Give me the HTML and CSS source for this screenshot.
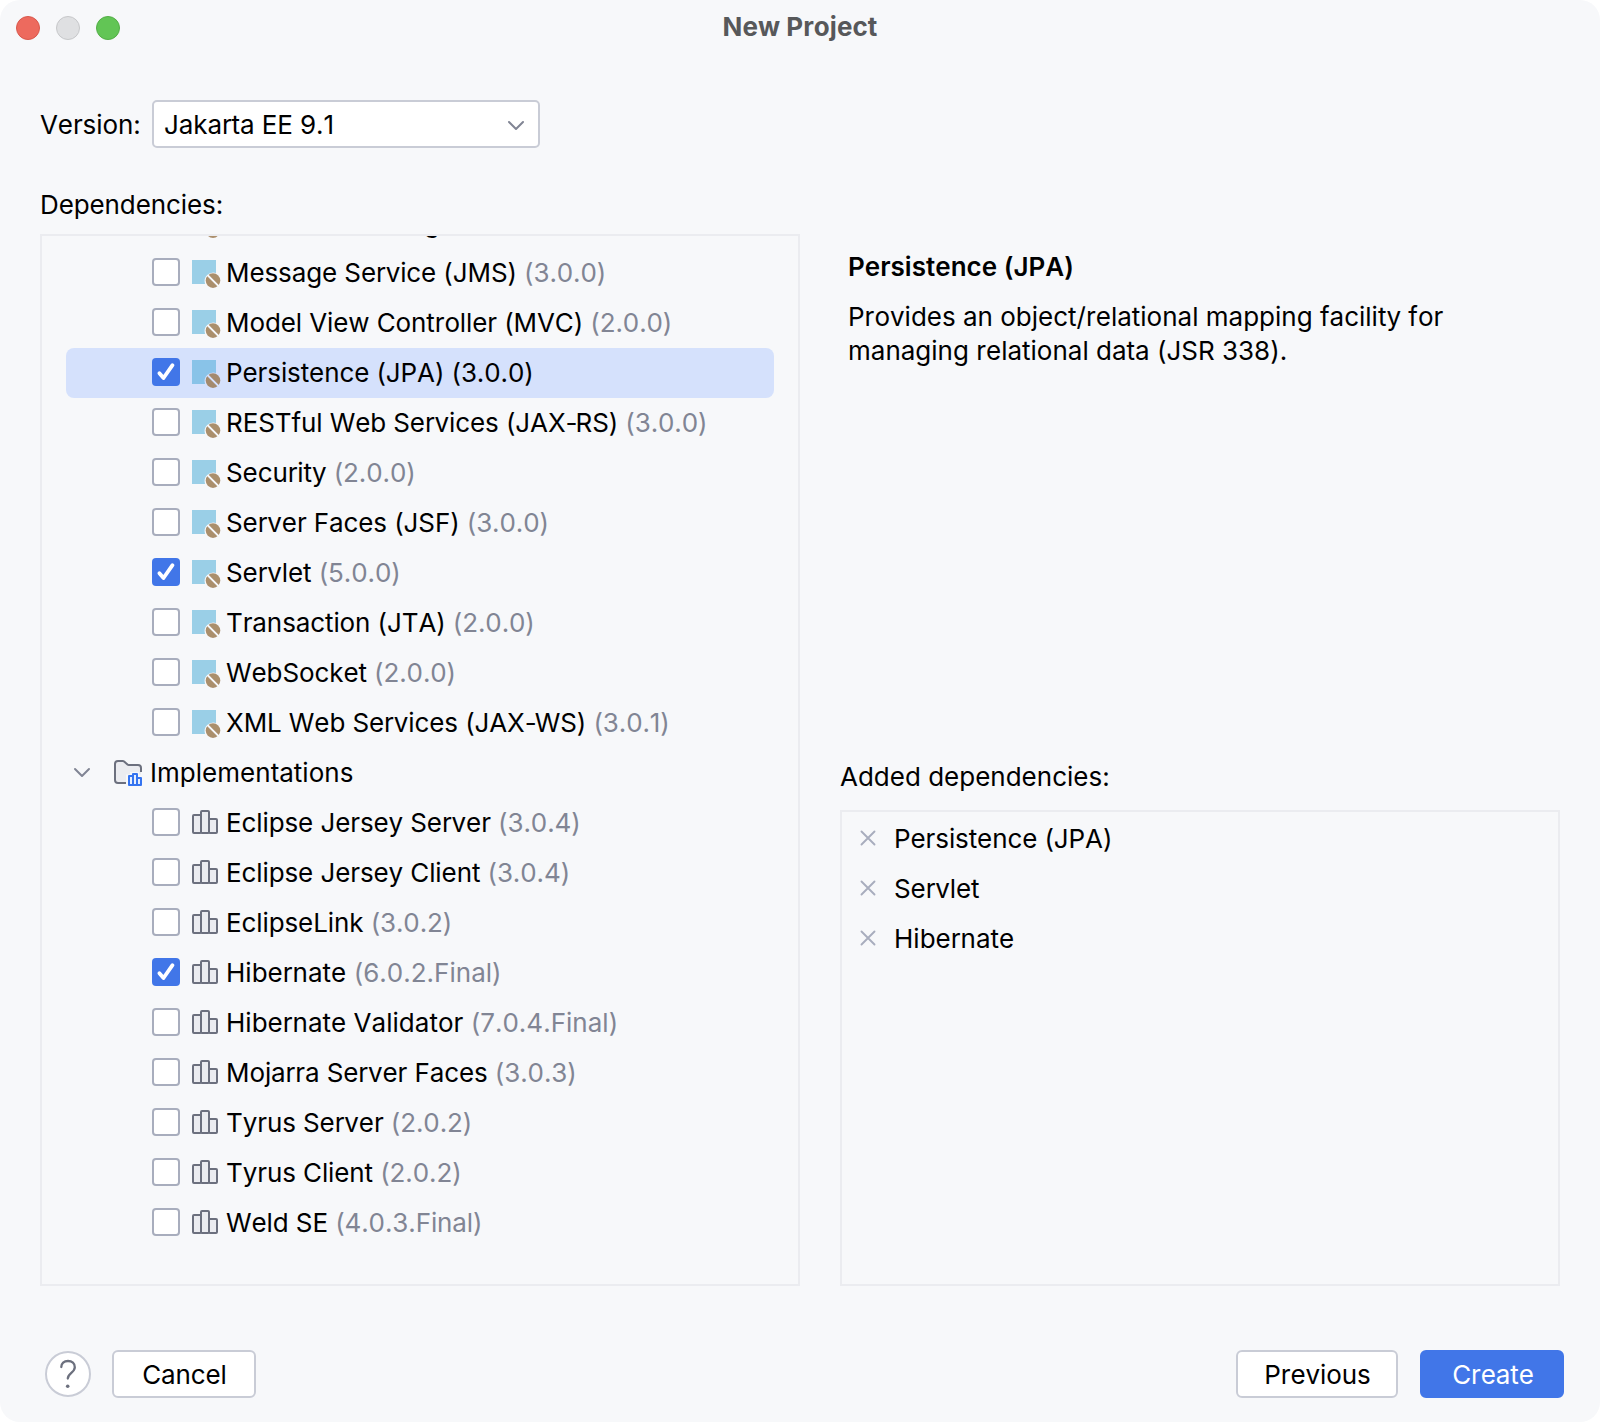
FILE: index.html
```html
<!DOCTYPE html>
<html lang="en">
<head>
<meta charset="utf-8">
<title>New Project</title>
<link rel="stylesheet" href="styles.css">
</head>
<body>
<svg class="defs" width="0" height="0" aria-hidden="true">
  <symbol id="spec" viewBox="0 0 32 32">
    <path fill="#3ea6d3" fill-opacity=".5" d="M2 2h24v12.900a8.800 8.800 0 0 0-11 11.100H2z"/>
    <clipPath id="bean"><circle cx="23" cy="22.600" r="7.300"/></clipPath>
    <g clip-path="url(#bean)"><path fill="#967144" fill-opacity=".78" d="M13 11.200 34.400 32.600H36V12H13zM12 12.900V34H33.100z"/></g>
  </symbol>
  <symbol id="lib" viewBox="0 0 32 32">
    <g fill="#ebecf0" stroke="#6c707e" stroke-width="2">
      <rect x="3" y="7" width="8" height="18" rx="1"/>
      <rect x="19" y="11" width="8" height="14" rx="1"/>
      <rect x="11" y="3" width="8" height="22" rx="1"/>
    </g>
  </symbol>
  <symbol id="folder" viewBox="0 0 32 32">
    <path fill="#ebecf0" d="M3 6a3 3 0 0 1 3-3h6l5 4h10a2 2 0 0 1 2 2v16H6a3 3 0 0 1-3-3z"/>
    <path fill="none" stroke="#6c707e" stroke-width="2" d="M14 25H6a3 3 0 0 1-3-3V6a3 3 0 0 1 3-3h4.800a2 2 0 0 1 1.300.5L15.500 6.500a2 2 0 0 0 1.300.5H26a3 3 0 0 1 3 3v4"/>
    <path fill="#f7f8fa" d="M14 16.500h4V14h9v2.500h3.500V30H14z"/>
    <path fill="#e7effd" stroke="#3574f0" stroke-width="2" stroke-linejoin="round" d="M17 18h4v9h-4zM25 20h4v7h-4zM21 16h4v11h-4z"/>
  </symbol>
  <symbol id="check" viewBox="0 0 28 28">
    <path fill="none" stroke="#fff" stroke-width="3.800" stroke-linecap="round" stroke-linejoin="round" d="M7.400 15.200 11.500 20 20.500 7.200"/>
  </symbol>
  <symbol id="chevron" viewBox="0 0 18 12">
    <path fill="none" stroke="#818594" stroke-width="2" stroke-linecap="round" stroke-linejoin="round" d="M2 2l7 7 7-7"/>
  </symbol>
  <symbol id="cross" viewBox="0 0 16 16">
    <path fill="none" stroke="#a8adbd" stroke-width="1.900" stroke-linecap="round" d="M1.500 1.500l13 13M14.500 1.500l-13 13"/>
  </symbol>
</svg>
<div class="window">
  <header class="titlebar">
    <div class="lights"><i class="light red"></i><i class="light gray"></i><i class="light green"></i></div>
    <h1 class="title">New Project</h1>
  </header>
  <div class="version">
    <span>Version:</span>
    <div class="select"><span>Jakarta EE 9.1</span><svg class="chevron"><use href="#chevron"/></svg></div>
  </div>
  <main class="content">
    <section class="left">
      <div class="label">Dependencies:</div>
      <div class="tree">
        <div class="row"><span class="box"></span><svg class="icon"><use href="#spec"/></svg><span>JSON Processing (JSON-P) <em>(2.0.1)</em></span></div>
        <div class="row"><span class="box"></span><svg class="icon"><use href="#spec"/></svg><span>Message Service (JMS) <em>(3.0.0)</em></span></div>
        <div class="row"><span class="box"></span><svg class="icon"><use href="#spec"/></svg><span>Model View Controller (MVC) <em>(2.0.0)</em></span></div>
        <div class="row selected"><svg class="box on"><use href="#check"/></svg><svg class="icon"><use href="#spec"/></svg><span>Persistence (JPA) <em>(3.0.0)</em></span></div>
        <div class="row"><span class="box"></span><svg class="icon"><use href="#spec"/></svg><span>RESTful Web Services (JAX<span class="hyphen">-</span>RS) <em>(3.0.0)</em></span></div>
        <div class="row"><span class="box"></span><svg class="icon"><use href="#spec"/></svg><span>Security <em>(2.0.0)</em></span></div>
        <div class="row"><span class="box"></span><svg class="icon"><use href="#spec"/></svg><span>Server Faces (JSF) <em>(3.0.0)</em></span></div>
        <div class="row"><svg class="box on"><use href="#check"/></svg><svg class="icon"><use href="#spec"/></svg><span>Servlet <em>(5.0.0)</em></span></div>
        <div class="row"><span class="box"></span><svg class="icon"><use href="#spec"/></svg><span>Transaction (JTA) <em>(2.0.0)</em></span></div>
        <div class="row"><span class="box"></span><svg class="icon"><use href="#spec"/></svg><span>WebSocket <em>(2.0.0)</em></span></div>
        <div class="row"><span class="box"></span><svg class="icon"><use href="#spec"/></svg><span>XML Web Services (JAX<span class="hyphen">-</span>WS) <em>(3.0.1)</em></span></div>
        <div class="row group"><svg class="chevron"><use href="#chevron"/></svg><svg class="icon"><use href="#folder"/></svg><span>Implementations</span></div>
        <div class="row"><span class="box"></span><svg class="icon"><use href="#lib"/></svg><span>Eclipse Jersey Server <em>(3.0.4)</em></span></div>
        <div class="row"><span class="box"></span><svg class="icon"><use href="#lib"/></svg><span>Eclipse Jersey Client <em>(3.0.4)</em></span></div>
        <div class="row"><span class="box"></span><svg class="icon"><use href="#lib"/></svg><span>EclipseLink <em>(3.0.2)</em></span></div>
        <div class="row loose"><svg class="box on"><use href="#check"/></svg><svg class="icon"><use href="#lib"/></svg><span>Hibernate <em>(6.0.2.Final)</em></span></div>
        <div class="row loose"><span class="box"></span><svg class="icon"><use href="#lib"/></svg><span>Hibernate Validator <em>(7.0.4.Final)</em></span></div>
        <div class="row"><span class="box"></span><svg class="icon"><use href="#lib"/></svg><span>Mojarra Server Faces <em>(3.0.3)</em></span></div>
        <div class="row"><span class="box"></span><svg class="icon"><use href="#lib"/></svg><span>Tyrus Server <em>(2.0.2)</em></span></div>
        <div class="row"><span class="box"></span><svg class="icon"><use href="#lib"/></svg><span>Tyrus Client <em>(2.0.2)</em></span></div>
        <div class="row"><span class="box"></span><svg class="icon"><use href="#lib"/></svg><span>Weld SE <em>(4.0.3.Final)</em></span></div>
      </div>
    </section>
    <section class="right">
      <div class="details">
        <h2>Persistence (JPA)</h2>
        <p>Provides an object/relational mapping facility for<br>managing relational data (JSR 338).</p>
      </div>
      <div class="label">Added dependencies:</div>
      <div class="added">
        <div class="item"><svg class="cross"><use href="#cross"/></svg><span>Persistence (JPA)</span></div>
        <div class="item"><svg class="cross"><use href="#cross"/></svg><span>Servlet</span></div>
        <div class="item loose"><svg class="cross"><use href="#cross"/></svg><span>Hibernate</span></div>
      </div>
    </section>
  </main>
  <footer class="footer">
    <svg class="help" viewBox="0 0 46 46">
      <circle cx="23" cy="23" r="22" fill="#fff" stroke="#c9ccd6" stroke-width="2"/>
      <path fill="none" stroke="#6c707e" stroke-width="2.300" stroke-linecap="round" d="M16.300 16C16.300 12.300 19 10 23 10s6.800 2.500 6.800 6.200c0 5.400-7 5.800-7 11.300"/>
      <circle cx="22.700" cy="35.300" r="1.800" fill="#6c707e"/>
    </svg>
    <button class="btn">Cancel</button>
    <span class="spacer"></span>
    <button class="btn previous">Previous</button>
    <button class="btn primary">Create</button>
  </footer>
</div>
</body>
</html>
```
FILE: styles.css
```css
* { box-sizing: border-box; }
body { margin: 0; background: #fff; }
.defs { position: absolute; }
svg { display: block; flex: none; }
.window {
  width: 1600px;
  height: 1422px;
  border-radius: 20px;
  background: #f7f8fa;
  overflow: hidden;
  display: flex;
  flex-direction: column;
  font: 26px/32px Inter, sans-serif;
  font-kerning: none;
  font-feature-settings: "calt" 0;
  letter-spacing: -0.1px;
  color: #000;
}
.titlebar { height: 100px; padding: 11px 16px 0; display: grid; grid-template-columns: 1fr auto 1fr; align-items: start; }
.lights { display: flex; gap: 16px; padding-top: 5px; }
.light { width: 24px; height: 24px; border-radius: 50%; border: 1px solid; }
.red { background: #ed6a5e; border-color: #d8584c; }
.gray { background: #dfe0e2; border-color: #c6c7c9; }
.green { background: #62c555; border-color: #53ae46; }
.title { margin: 0; font-size: 26px; font-weight: 700; color: #57585a; letter-spacing: 0.05px; }
.version { height: 48px; padding-left: 40px; display: flex; align-items: center; }
.version > span { width: 112px; padding-top: 2px; }
.select {
  width: 388px;
  height: 48px;
  padding: 2px 13px 0 10px;
  border: 2px solid #c9ccd6;
  border-radius: 5px;
  background: #fff;
  display: flex;
  align-items: center;
  justify-content: space-between;
}
.chevron { width: 18px; height: 12px; }
.select .chevron { margin-top: 2px; }
.content { margin-top: 40px; padding: 0 40px; height: 1098px; display: flex; gap: 40px; }
.left { width: 760px; display: flex; flex-direction: column; }
.label { height: 46px; padding-top: 1px; }
.tree { height: 1052px; border: 2px solid #ebecf0; overflow: hidden; padding: 0 24px; display: flex; flex-direction: column; }
.tree .row:first-child { margin-top: -38px; }
.row { flex: none; height: 50px; display: flex; align-items: center; padding-left: 86px; white-space: pre; border-radius: 8px; }
.row em { font-style: normal; color: #818594; }
.selected { background: #d5e1fc; }
.selected em { color: #000; }
.box { width: 28px; height: 28px; margin: 0 10px 2px 0; border: 2px solid #a8adbd; border-radius: 4px; background: #fff; }
.box.on { border: 0; background: #4176e8; }
.icon { width: 32px; height: 32px; margin: 2px 4px 0 0; }
.loose { letter-spacing: 0.02px; }
.hyphen { letter-spacing: -2px; }
.group { padding-left: 7px; letter-spacing: 0.03px; }
.group .chevron { margin-right: 21px; }
.group .icon { margin-right: 6px; }
.right { width: 720px; display: flex; flex-direction: column; }
.right .label { height: 50px; letter-spacing: 0; }
.details { height: 572px; padding: 63px 8px 0; }
.details h2 { margin: 0; font-size: 26px; line-height: 32px; font-weight: 600; letter-spacing: 0.03px; }
.details p { margin: 17px 0 0; line-height: 34px; letter-spacing: 0; }
.added { height: 476px; border: 2px solid #ebecf0; padding: 2px 18px; }
.item { height: 50px; display: flex; align-items: center; gap: 18px; }
.cross { width: 16px; height: 16px; margin-bottom: 2px; }
.footer { margin-top: 64px; height: 48px; padding: 0 36px 0 45px; display: flex; align-items: center; }
.help { width: 46px; height: 46px; margin-right: 21px; }
.btn {
  width: 144px;
  height: 48px;
  padding: 2px 0 0 1px;
  border: 2px solid #c9ccd6;
  border-radius: 6px;
  background: #fff;
  color: #000;
  font: inherit;
  font-kerning: none;
  letter-spacing: inherit;
}
.spacer { flex: 1; }
.previous { width: 162px; margin-right: 22px; }
.primary { background: #4176e8; border-color: #4176e8; color: #fff; padding-left: 2px; }
```
